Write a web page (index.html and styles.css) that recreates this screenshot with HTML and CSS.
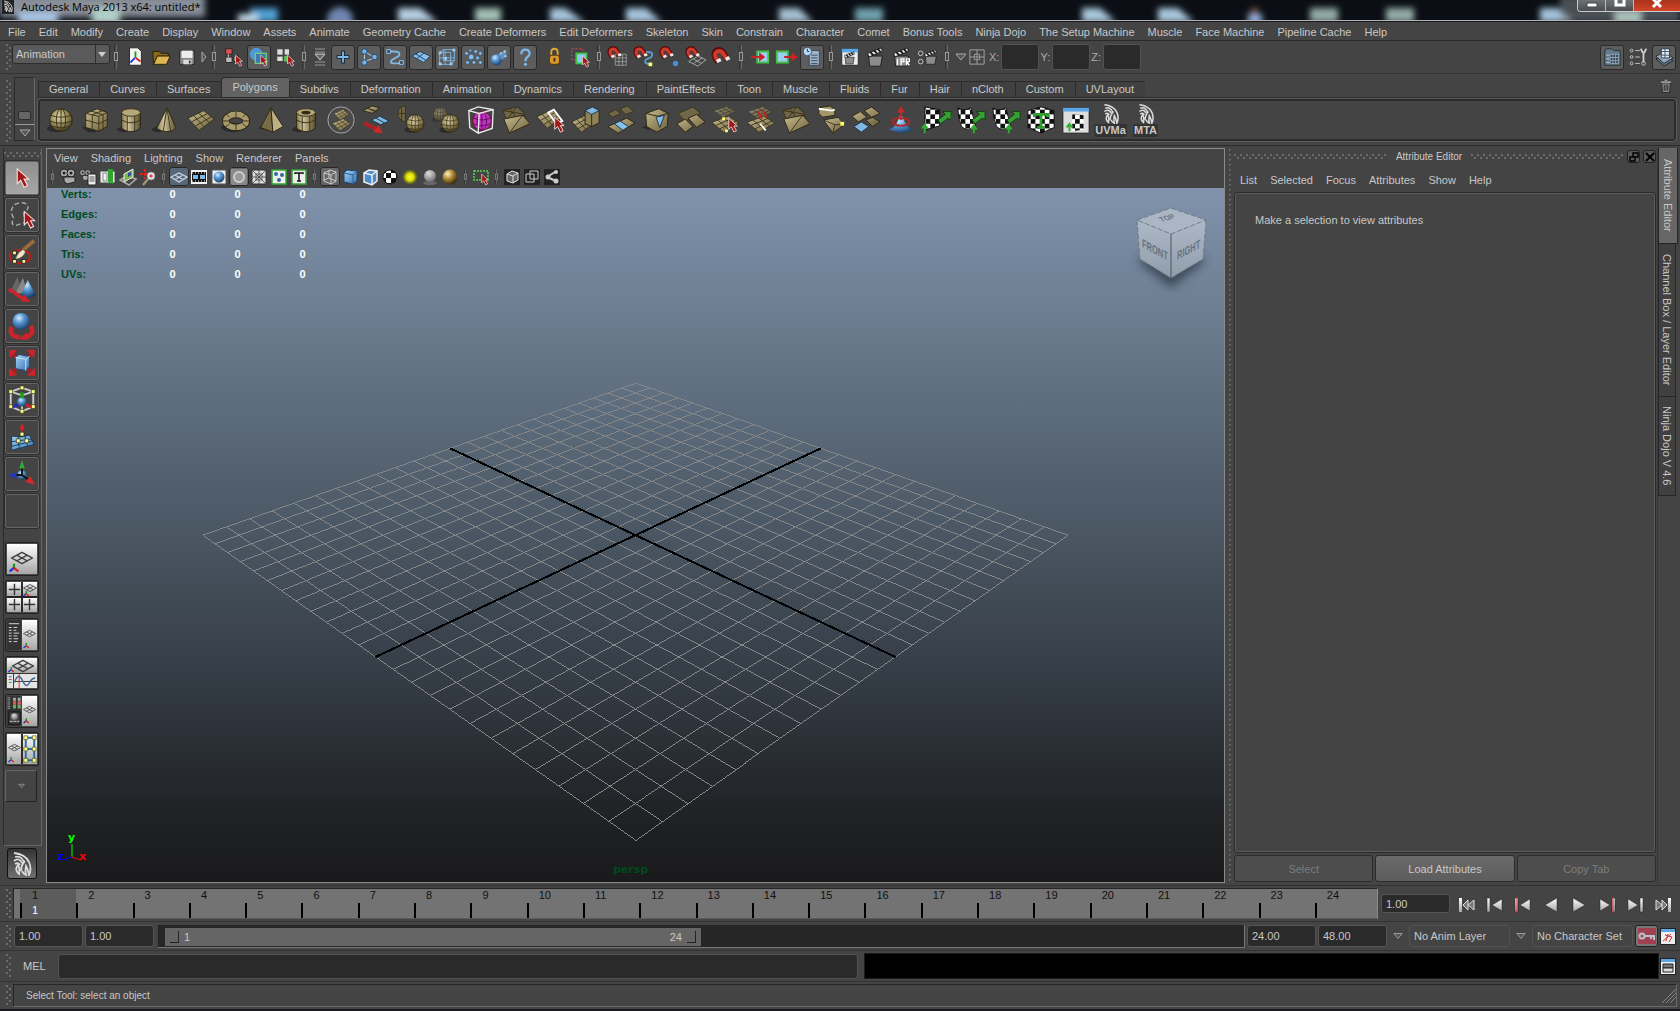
FILE: index.html
```html
<!DOCTYPE html>
<html lang="en">
<head>
    <meta charset="UTF-8">
    <meta name="viewport" content="width=device-width, initial-scale=1.0">
    <title>Autodesk Maya 2013 x64: untitled*</title>
    <link rel="stylesheet" href="styles.css">
</head>
<body>
    <!-- Icon library -->
    <svg class="defs" width="0" height="0" aria-hidden="true">
        <defs>
            <linearGradient id="tan" x1="0" y1="0" x2="1" y2="1"><stop offset="0" stop-color="#c9bd92"/><stop offset="1" stop-color="#6b5f3a"/></linearGradient>
            <linearGradient id="tanh" x1="0" y1="0" x2="1" y2="0"><stop offset="0" stop-color="#857a52"/><stop offset=".35" stop-color="#cdc29a"/><stop offset="1" stop-color="#574d2e"/></linearGradient>
            <radialGradient id="tanr" cx=".4" cy=".35" r=".7"><stop offset="0" stop-color="#e0d7b0"/><stop offset=".5" stop-color="#9d915f"/><stop offset="1" stop-color="#453c20"/></radialGradient>
            <linearGradient id="blue" x1="0" y1="0" x2="1" y2="1"><stop offset="0" stop-color="#a5d3f5"/><stop offset="1" stop-color="#3573b0"/></linearGradient>
            <radialGradient id="bluer" cx=".38" cy=".3" r=".75"><stop offset="0" stop-color="#d5ecff"/><stop offset=".4" stop-color="#5a99d6"/><stop offset="1" stop-color="#163a66"/></radialGradient>
            <linearGradient id="silver" x1="0" y1="0" x2="0" y2="1"><stop offset="0" stop-color="#ffffff"/><stop offset="1" stop-color="#a5a5a5"/></linearGradient>
            <linearGradient id="face" x1="0" y1="0" x2="0" y2="1"><stop offset="0" stop-color="#aeb9c8"/><stop offset="1" stop-color="#8f9dab"/></linearGradient>
            <radialGradient id="gold" cx=".35" cy=".3" r=".75"><stop offset="0" stop-color="#fff3c0"/><stop offset=".45" stop-color="#b08a35"/><stop offset="1" stop-color="#33240a"/></radialGradient>
            <radialGradient id="lamp"><stop offset="0" stop-color="#ffff30"/><stop offset=".5" stop-color="#d8d800"/><stop offset="1" stop-color="#888800" stop-opacity="0"/></radialGradient>
            <radialGradient id="grayr" cx=".4" cy=".3" r=".75"><stop offset="0" stop-color="#e0e0e0"/><stop offset="1" stop-color="#666666"/></radialGradient>
            <filter id="soft"><feGaussianBlur stdDeviation="5"/></filter>
            <filter id="softer" x="-10%" width="120%" y="-60%" height="220%"><feGaussianBlur stdDeviation="3"/></filter>
            <pattern id="check" width="10" height="10" patternUnits="userSpaceOnUse"><path fill="#fff" d="M0 0h10v10H0z"/><path fill="#111" d="M0 0h5v5H0zM5 5h5v5H5z"/></pattern>
        </defs>

        <!-- shared parts -->
        <symbol id="cursor" viewBox="0 0 12 18"><path d="M1 1v13l3-3 3 6 3-1.500-3-5.500h4z" fill="#a01818" stroke="#f4dcdc"/></symbol>
        <symbol id="clap" viewBox="0 0 24 24"><path d="M4 11h15l-2 11H5z" fill="#8c8c8c" stroke="#1c1c1c"/><path d="M3 8L18 2l1 4L4 12z" fill="#e8e8e8" stroke="#111"/><path d="M6 7l3 3M10 5l3 3M14 3.500l3 3" stroke="#111" stroke-width="2"/></symbol>
        <symbol id="magnet" viewBox="0 0 24 24"><path d="M7 15L4 10Q2 4 8 3q3 0 5 4l4 6" fill="none" stroke="#5a0e0a" stroke-width="6"/><path d="M7 14L4.500 10Q3 5 8 4q3 0 5 4l3 4" fill="none" stroke="#d23a2e" stroke-width="4"/><path d="M5 13l4-2 1.500 3-4 2zM14 11l3.500-2 2 3-4 2z" fill="#eee"/></symbol>
        <symbol id="sheet" viewBox="1 6 30 23" preserveAspectRatio="none"><path d="M2 15L19 7l11 9-16 12z" fill="url(#tan)" stroke="#3a3218"/><path d="M6 19l17-9M10 23.500l17-10M8 12l11 12M13.500 9.500l11 10" fill="none" stroke="#3a3218"/></symbol>
        <symbol id="plane2" viewBox="0 0 24 14"><path d="M12 1l11 6-11 6L1 7z M6.500 4l11 6M17.500 4l-11 6" fill="none" stroke="#444" stroke-width="1.500"/></symbol>
        <symbol id="tri" viewBox="0 0 12 12"><path d="M6 6V1" stroke="#0a9a0a" stroke-width="2.500"/><path d="M6 6L1 10" stroke="#2030e0" stroke-width="2.500"/><path d="M6 6l5 4" stroke="#e02020" stroke-width="2.500"/></symbol>
        <symbol id="bird" viewBox="0 0 24 24"><path d="M4 1q11 1 15 9 3 7 0 13-1-6-3-9-1 6 0 9-3-1-4-4M5 5q6-2 9 5M4 9q5-4 8 2M5 12q3-2 5 1M9 22q-5-4-1-9 2 3 1 9zM11 19q0-6 4-10" fill="none" stroke="#dcdcdc" stroke-width="1.800"/></symbol>
        <symbol id="sep" viewBox="0 0 12 28"><path d="M6 2v24" stroke="#8c8c8c"/><path d="M5 2v24" stroke="#222"/><rect x="4.500" y="9.500" width="3" height="8" fill="#444" stroke="#999"/></symbol>
        <symbol id="down" viewBox="0 0 12 10"><path d="M1 2h10L6 8z" fill="#555" stroke="#aaa"/></symbol>

        <!-- status line -->
        <symbol id="i-new" viewBox="0 0 24 24"><path d="M6 2h9l4 4v15H6z" fill="#f4f4f4" stroke="#222"/><path d="M12.500 13V6" stroke="#12a012" stroke-width="2"/><path d="M12 13l-5 5" stroke="#2040e0" stroke-width="2"/><path d="M13 13l5 4" stroke="#e02020" stroke-width="2"/></symbol>
        <symbol id="i-open" viewBox="0 0 24 24"><path d="M3 6h7l2 2h8v3H8l-4 9z" fill="#8a6a20" stroke="#2b2000"/><path d="M8 11h14l-4 9H4z" fill="#dcb554" stroke="#2b2000"/></symbol>
        <symbol id="i-save" viewBox="0 0 24 24"><path d="M4 5h16v15H5l-1-1z" fill="#888" stroke="#222"/><path d="M6 5h12v8H6z" fill="#eee"/><path d="M8 15h9v5H8z" fill="#ddd"/><path d="M14 16h2v3h-2z" fill="#333"/></symbol>
        <symbol id="i-hier" viewBox="0 0 24 24"><path d="M4 3h7v6H4z" fill="#e05050" stroke="#222"/><path d="M4 12h7v6H4zM13 11h5v6h-5z" fill="#bbb" stroke="#222"/><path d="M7 9v3" stroke="#ddd"/><use href="#cursor" x="14" y="9" width="9" height="14"/></symbol>
        <symbol id="i-obj" viewBox="0 0 24 24"><circle cx="9" cy="9" r="7" fill="#4f98d8"/><path d="M8 8h12v11H8z" fill="#3e7ab0" stroke="#6bd06b" stroke-width="1.500"/><use href="#cursor" x="13" y="9" width="9" height="14"/></symbol>
        <symbol id="i-comp" viewBox="0 0 24 24"><path d="M3 3h7v7H3zM11 3h6v7h-6zM3 11h7v6H3z" fill="#ddd" stroke="#333"/><path d="M11 11h6v6h-6z" fill="#57c057"/><use href="#cursor" x="14" y="9" width="9" height="14"/></symbol>
        <symbol id="i-mask" viewBox="0 0 20 24"><path d="M5 4h10M5 7h10M5 17h10M5 20h10" stroke="#999"/><path d="M5 9h10l-5 6z" fill="#666" stroke="#ccc"/></symbol>
        <symbol id="i-plus" viewBox="0 0 24 24"><path d="M12 5v14M5 12h14" stroke="#123" stroke-width="4"/><path d="M12 6v12M6 12h12" stroke="#7db8e8" stroke-width="2"/></symbol>
        <symbol id="i-joint" viewBox="0 0 24 24"><path d="M7 6v12M7 6l10 6M7 17l11-4" stroke="#bcdcf5" fill="none"/><g fill="#79b2e2" stroke="#1a4468"><circle cx="7" cy="6" r="3"/><circle cx="7" cy="18" r="3"/><circle cx="18" cy="12" r="3"/></g></symbol>
        <symbol id="i-curve" viewBox="0 0 24 24"><path d="M5 6h6q8 0 5 5l-7 4q-4 4 2 4h8" fill="none" stroke="#7db8e8" stroke-width="2"/><path d="M3 4h4v4H3zM17 16h4v4h-4z" fill="#345" stroke="#9cf"/></symbol>
        <symbol id="i-surf" viewBox="0 0 24 24"><path d="M2 11l9-5 11 5-7 7z" fill="#86bde9" stroke="#1b3c58"/><path d="M6 8.500l11 7M15 8L7 14" stroke="#1b3c58"/></symbol>
        <symbol id="i-latt" viewBox="0 0 24 24"><path d="M4 7h12v13H4zM8 4h12v12H8zM10 5v15M4 13h16M4 7l4-3M16 20l4-4" fill="none" stroke="#7db8e8"/><path d="M3 6h3v3H3zM3 18h3v3H3zM15 18h3v3h-3zM18 3h3v3h-3zM9 12h3v3H9z" fill="#9cd0fa"/></symbol>
        <symbol id="i-part" viewBox="0 0 24 24"><g fill="#86bde9" stroke="#1b3c58" stroke-width=".5"><circle cx="5" cy="8" r="2"/><circle cx="10" cy="12" r="3"/><circle cx="15" cy="6" r="2"/><circle cx="17" cy="13" r="2"/><circle cx="6" cy="18" r="2"/><circle cx="13" cy="18" r="2"/><circle cx="20" cy="8" r="2"/><circle cx="20" cy="18" r="2"/><circle cx="9" cy="5" r="1.500"/></g></symbol>
        <symbol id="i-rend" viewBox="0 0 24 24"><circle cx="9" cy="15" r="6" fill="url(#bluer)"/><path d="M11 9l9-5v8l-5 3z" fill="#5c94c6"/><path d="M13 7h2v2h-2zM17 5h2v2h-2zM18 10h2v2h-2z" fill="#bde"/></symbol>
        <symbol id="i-help" viewBox="0 0 24 24"><path d="M8 9q0-5 4.500-5T17 8.500q0 2-3 4-1.500 1-1.500 4" fill="none" stroke="#7db8e8" stroke-width="2.500"/><circle cx="12.500" cy="20" r="1.700" fill="#7db8e8"/></symbol>
        <symbol id="i-lock" viewBox="0 0 24 24"><path d="M9 11V7q0-4 3.500-4T16 7v4" fill="none" stroke="#e0a830" stroke-width="2"/><rect x="7" y="10" width="11" height="10" rx="3" fill="#d8982a" stroke="#4b2f00"/><path d="M12.500 13v4" stroke="#422" stroke-width="2"/></symbol>
        <symbol id="i-hilite" viewBox="0 0 24 24"><path d="M3 3h12v12H3z" fill="none" stroke="#e05050" stroke-dasharray="2 2"/><path d="M8 8h11v11H8z" fill="#8ccaf5" stroke="#40c040" stroke-width="2"/><use href="#cursor" x="14" y="10" width="9" height="14"/></symbol>
        <symbol id="i-sgrid" viewBox="0 0 24 24"><path d="M9 9h12v12H9zM13 9v12M17 9v12M9 13h12M9 17h12" fill="none" stroke="#999"/><use href="#magnet" x="0" y="0" width="20" height="20"/></symbol>
        <symbol id="i-scurve" viewBox="0 0 24 24"><path d="M12 7q12-2 8 5l-6 3q-3 4 5 5" fill="none" stroke="#5a9ad0" stroke-width="2"/><path d="M17 18h4v4h-4z" fill="#ff6"/><use href="#magnet" x="0" y="0" width="20" height="20"/></symbol>
        <symbol id="i-spoint" viewBox="0 0 24 24"><circle cx="18" cy="19" r="3" fill="#4a90d0"/><use href="#magnet" x="0" y="0" width="20" height="20"/></symbol>
        <symbol id="i-splane" viewBox="0 0 24 24"><path d="M4 17l10-6 9 4-9 7zM9 14l9 5M19 13L9 19" fill="none" stroke="#aaa"/><use href="#magnet" x="0" y="0" width="20" height="20"/></symbol>
        <symbol id="i-in" viewBox="0 0 24 24"><path d="M9 6h12v12H9z" fill="#9ccdf2" stroke="#46c046" stroke-width="2"/><path d="M2 12h12M12 9l4 3-4 3z" stroke="#c22" stroke-width="2" fill="#c22"/></symbol>
        <symbol id="i-out" viewBox="0 0 24 24"><path d="M2 6h12v12H2z" fill="#9ccdf2" stroke="#46c046" stroke-width="2"/><path d="M10 12h10M19 9l4 3-4 3z" stroke="#c22" stroke-width="2" fill="#c22"/></symbol>
        <symbol id="i-hist" viewBox="0 0 24 24"><path d="M9 5h11v16H9z" fill="#9fb6cc" stroke="#345"/><path d="M11 10h7M11 13h7M11 16h7M11 19h7" stroke="#345"/><circle cx="7" cy="6" r="4.500" fill="#b9d8f0" stroke="#357"/><path d="M7 3v3h2" stroke="#235" fill="none"/></symbol>
        <symbol id="i-rview" viewBox="0 0 24 24"><path d="M3 3h18v18H3z" fill="#eee" stroke="#222"/><path d="M3 3h18v4H3z" fill="#5aa6e6"/><use href="#clap" x="4" y="5" width="16" height="16"/></symbol>
        <symbol id="i-ipr" viewBox="0 0 24 24"><use href="#clap" width="24" height="24"/><path d="M7 14v7M11 21v-7h3v3h-3M17 21v-7h3v3h-3l3 4" fill="none" stroke="#fff" stroke-width="1.500"/></symbol>
        <symbol id="i-rset" viewBox="0 0 24 24"><use href="#clap" x="6" y="2" width="19" height="20"/><circle cx="4" cy="8" r="2.500" fill="#444" stroke="#ccc"/><circle cx="4" cy="17" r="2.500" fill="#444" stroke="#ccc"/></symbol>
        <symbol id="i-abs" viewBox="0 0 18 18"><path d="M1 1h16v16H1zM9 1v16M1 9h16" fill="none" stroke="#aaa"/><path d="M6 6h6v6H6z" fill="#444" stroke="#aaa"/><path d="M9 7v4M7 9h4" stroke="#aaa"/></symbol>
        <symbol id="i-attr" viewBox="0 0 24 24"><path d="M4 6l2-3h6l2 2h7v16H4z" fill="#64798e" stroke="#233"/><path d="M10 9h9v10h-9zM13 9v10M16 9v10M10 12.500h9M10 16h9" fill="#2e4152" stroke="#9ab"/><path d="M6 10h3M6 14h3M6 18h3" stroke="#cde"/></symbol>
        <symbol id="i-tool" viewBox="0 0 24 24"><g fill="none" stroke="#ccc"><circle cx="5" cy="5" r="1.500"/><circle cx="5" cy="12" r="1.500"/><circle cx="5" cy="19" r="1.500"/><path d="M9 5h5M9 12h5M9 19h5"/><path d="M15 3l2 4h2l2-4M18 7v11" stroke-width="2"/><circle cx="18" cy="19" r="2"/></g></symbol>
        <symbol id="i-chan" viewBox="0 0 24 24"><path d="M3 14l10-4 9 6-10 6z" fill="#5d7388" stroke="#222"/><path d="M3 11l10-4 9 6-10 6z" fill="#93abc0" stroke="#222"/><path d="M9 3h9v10H9z" fill="#dfeaf3" stroke="#334"/><path d="M4 5h5M4 9h5M9 6h9M9 10h9M13 3v10" stroke="#456"/></symbol>
        <symbol id="i-trash" viewBox="0 0 16 18"><path d="M3 6h10l-1 11H4z" fill="#8a8a8a" stroke="#222"/><path d="M2 4h12v2H2zM6 2h4v2H6z" fill="#ccc" stroke="#222" stroke-width=".5"/><path d="M6 8v7M8 8v7M10 8v7" stroke="#222"/></symbol>

        <!-- shelf -->
        <symbol id="s-plane" viewBox="0 0 32 32"><use href="#sheet" x="1" y="5" width="30" height="23"/></symbol>
        <symbol id="s-sphere" viewBox="0 0 32 32"><ellipse cx="10" cy="25" rx="9" ry="4" fill="#2c2c2c"/><circle cx="16" cy="16" r="12" fill="url(#tanr)" stroke="#2b2410"/><g fill="none" stroke="#3a3218"><ellipse cx="16" cy="16" rx="5" ry="12"/><path d="M16 4v24M5 11q11 4 22 0M4 17q12 5 24 0M7 23q9 3 18 0"/></g></symbol>
        <symbol id="s-cube" viewBox="0 0 32 32"><path d="M1 24l8-3 8 8H8z" fill="#2c2c2c"/><path d="M5 9l12-5 11 4v15l-9 5-14-4z" fill="url(#tan)" stroke="#2b2410"/><path d="M5 9l14 3 9-4M19 12v16M12 10.500v15M23.500 10v15.500M5 16l14 4 9-4.500M11 6.500l13 4M23 6l-11 4.500" fill="none" stroke="#3a3218"/></symbol>
        <symbol id="s-cyl" viewBox="0 0 32 32"><ellipse cx="9" cy="26" rx="8" ry="3" fill="#2c2c2c"/><path d="M6 8v17q10 7 20 0V8" fill="url(#tanh)" stroke="#2b2410"/><path d="M6 16q10 6 20 0M12 11v17M20 11v17" fill="none" stroke="#3a3218"/><ellipse cx="16" cy="8" rx="10" ry="4" fill="#b5a97c" stroke="#3a3218"/></symbol>
        <symbol id="s-cone" viewBox="0 0 32 32"><ellipse cx="8" cy="26" rx="7" ry="3" fill="#2c2c2c"/><path d="M17 3L6 25q11 7 21 0z" fill="url(#tanh)" stroke="#2b2410"/><path d="M17 3l-4 25M17 3l4 25" stroke="#3a3218"/></symbol>
        <symbol id="s-torus" viewBox="0 0 32 32"><ellipse cx="12" cy="24" rx="12" ry="5" fill="#2c2c2c"/><ellipse cx="16" cy="17" rx="11" ry="7" fill="none" stroke="#2b2410" stroke-width="8"/><ellipse cx="16" cy="17" rx="11" ry="7" fill="none" stroke="#a79b6d" stroke-width="6"/><path d="M16 21v7M16 7v6M9 20l-5 4M23 20l5 4M9 13L5 9M23 13l4-4M2 17h6M24 17h6" stroke="#3a3218"/></symbol>
        <symbol id="s-pyr" viewBox="0 0 32 32"><path d="M2 25l10-7v9z" fill="#2c2c2c"/><path d="M16 3L5 24l13 5z" fill="#776c45" stroke="#2b2410"/><path d="M16 3l2 26 11-6z" fill="#bdb184" stroke="#2b2410"/></symbol>
        <symbol id="s-pipe" viewBox="0 0 32 32"><use href="#s-cyl" width="32" height="32"/><ellipse cx="16" cy="8" rx="5" ry="2" fill="#332c15"/></symbol>
        <symbol id="s-comb" viewBox="0 0 32 32"><circle cx="16" cy="16" r="14" fill="#4a4a4a" stroke="#aaa"/><use href="#sheet" x="8" y="4" width="17" height="13"/><use href="#sheet" x="6" y="14" width="21" height="14"/></symbol>
        <symbol id="s-extr" viewBox="0 0 32 32"><path d="M2 6l10-5 8 2-8 6zM7 3.500l8 3" fill="url(#tan)" stroke="#2b2410"/><path d="M11 16l9-4 10 5-9 4z" fill="#7fb8e0" stroke="#234"/><path d="M16 14l9 5M11 5h2" stroke="#234"/><path d="M3 19l14 7" stroke="#b32222" stroke-width="4"/><path d="M23 30l-10-1 6-8z" fill="#c82a2a"/></symbol>
        <symbol id="s-sph2" viewBox="0 0 32 32"><g opacity=".5"><use href="#s-sphere" width="20" height="20"/></g><use href="#s-sphere" x="8" y="7" width="25" height="25"/></symbol>
        <symbol id="s-mirror" viewBox="0 0 32 32"><path d="M10 1v17Q2 16 2 9t8-8zM2 9h8M6 3v13" fill="#6f6747" stroke="#3a3218"/><use href="#s-sphere" x="8" y="7" width="25" height="25"/></symbol>
        <symbol id="s-cage" viewBox="0 0 32 32"><circle cx="17" cy="17" r="10" fill="#c233c2" stroke="#611"/><path d="M17 7v20M8 14q9 4 18 0M8 20q9 4 18 0" fill="none" stroke="#5c0f5c"/><ellipse cx="17" cy="17" rx="5" ry="10" fill="none" stroke="#5c0f5c"/><path d="M3 6l10-4 16 3-1 20-15 5-9-6zM3 6l11 3 15-4M14 9l-1 21" fill="none" stroke="#e8e8e8" stroke-width="1.500"/></symbol>
        <symbol id="s-fold" viewBox="0 0 32 32"><path d="M2 6l15-4 9 8-20 6z" fill="#6f6747" stroke="#3a3218"/><path d="M2 6l24 4M17 2L6 16M9 4l7 9" stroke="#3a3218"/><path d="M3 15l20-4 8 9-22 10z" fill="url(#tan)" stroke="#2b2410"/><path d="M9 30l14-19" stroke="#3a3218"/></symbol>
        <symbol id="s-cut" viewBox="0 0 32 32"><use href="#sheet" x="0" y="4" width="28" height="22"/><path d="M13 8l6-3 9 12-6 3z" fill="none" stroke="#fff" stroke-width="2"/><use href="#cursor" x="19" y="12" width="12" height="18"/></symbol>
        <symbol id="s-extface" viewBox="0 0 32 32"><use href="#sheet" y="10" width="26" height="20"/><path d="M15 6v14l7 3 8-4V6z" fill="#8d8159" stroke="#2b2410"/><path d="M15 6l8-4 7 4-8 4z" fill="#7fb8e0" stroke="#234"/><path d="M22 10v13" stroke="#2b2410"/></symbol>
        <symbol id="s-bridge" viewBox="0 0 32 32"><path d="M2 9l8-4 6 4-9 4zM15 4l8-3 6 6-8 3z" fill="#6f6747" stroke="#3a3218"/><path d="M2 23l20-9 9 5-18 11z" fill="url(#tan)" stroke="#2b2410"/><path d="M9 20l6-3 9 6-6 4z" fill="#86c2ee" stroke="#234"/></symbol>
        <symbol id="s-bevel" viewBox="0 0 32 32"><path d="M1 24l8-4v7z" fill="#2c2c2c"/><path d="M5 9l14-5 10 5-1 14-11 6-11-6z" fill="url(#tan)" stroke="#2b2410"/><path d="M5 9l13 3 11-3" fill="none" stroke="#2b2410"/><path d="M16 13l9-2-5 13z" fill="#84bde8" stroke="#234"/></symbol>
        <symbol id="s-dup" viewBox="0 0 32 32"><path d="M2 9l16-7 8 7-16 8z" fill="#6f6747" stroke="#3a3218"/><path d="M1 20l9-5 8 8-8 6zM13 14l9-4 9 8-9 6z" fill="url(#tan)" stroke="#2b2410"/></symbol>
        <symbol id="s-target" viewBox="0 0 32 32"><g opacity=".6"><use href="#sheet" x="2" y="1" width="25" height="13"/></g><use href="#sheet" y="11" width="31" height="19"/><path d="M12 13h3v3h-3zM15 26h3v3h-3z" fill="#ff7"/><use href="#cursor" x="18" y="13" width="11" height="17"/></symbol>
        <symbol id="s-split" viewBox="0 0 32 32"><g opacity=".6"><use href="#sheet" x="1" y="1" width="28" height="15"/></g><use href="#sheet" y="11" width="32" height="19"/><path d="M13 7l4 8M18 6l4 7" stroke="#c22" stroke-width="2"/><path d="M15 20l6 7" stroke="#fff" stroke-width="2"/></symbol>
        <symbol id="s-blocks" viewBox="0 0 32 32"><path d="M3 3l12-2 5 4v6L7 13 3 9z" fill="#a2966a" stroke="#2b2410"/><path d="M3 4l14 2 3-1" stroke="#fff" stroke-width="2" fill="none"/><path d="M8 16l16-3 6 8-12 9z" fill="url(#tan)" stroke="#2b2410"/><path d="M8 16l12 5 10 0M20 21l-2 9" fill="none" stroke="#3a3218"/><path d="M26 18h4v4h-4z" fill="#ff6"/></symbol>
        <symbol id="s-tiles" viewBox="0 0 32 32"><path d="M1 12l9-5 7 6-9 5zM14 6l8-4 9 7-9 4zM16 16l7-3 8 5-8 5z" fill="url(#tan)" stroke="#2b2410"/><path d="M3 23l8-5 8 5-8 6z" fill="#7fb8e0" stroke="#234"/></symbol>
        <symbol id="s-soft" viewBox="0 0 32 32"><path d="M1 26q10 0 13-14h4q3 14 13 14L17 30z" fill="url(#bluer)"/><ellipse cx="16" cy="18" rx="9" ry="4" fill="none" stroke="#b92323" stroke-width="2"/><path d="M16 16V6" stroke="#c52a2a" stroke-width="2"/><path d="M12 8l4-7 4 7z" fill="#c52a2a"/></symbol>
        <symbol id="s-uv" viewBox="0 0 32 32"><path d="M4 2l16 3v17L4 27z" fill="url(#check)" stroke="#111"/><path d="M18 16l8-6-3-3h9v9l-3-2-8 6z" fill="#37a037" stroke="#0d400d"/><path d="M4 30v-7M1 25l3-4 3 4" stroke="#2fae2f" stroke-width="2" fill="none"/></symbol>
        <symbol id="s-uvcyl" viewBox="0 0 32 32"><path d="M2 3q6 4 14 0 2 10 5 18-8 9-15 2Q2 15 2 3z" fill="url(#check)" stroke="#111"/><path d="M17 16l8-6-3-3h9v9l-3-2-8 6z" fill="#37a037" stroke="#0d400d"/><path d="M19 30v-6M16 26l3-4 3 4" stroke="#2fae2f" stroke-width="2" fill="none"/></symbol>
        <symbol id="s-uvauto" viewBox="0 0 32 32"><path d="M2 6l14-4 14 4v18l-14 6-14-6z" fill="url(#check)" stroke="#111"/><path d="M9 13v-3h14v3M16 11v12M12 24h8" stroke="#2fa02f" stroke-width="3" fill="none"/></symbol>
        <symbol id="s-uvwin" viewBox="0 0 32 32"><path d="M2 3h28v27H2z" fill="#ddd" stroke="#222"/><path d="M2 3h28v4H2z" fill="#5aa6e6"/><path d="M12 9l12 2v15l-12 2z" fill="url(#check)"/><path d="M9 28v-6M6 24l3-4 3 4" stroke="#2fae2f" stroke-width="2" fill="none"/></symbol>

        <!-- toolbox -->
        <symbol id="t-lasso" viewBox="0 0 32 32"><path d="M8 5q8-4 14 0 2 5-4 9l1 10-9 3q-7 1-3-8-5-8 1-14z" fill="none" stroke="#aaa" stroke-width="1.500" stroke-dasharray="5 3"/><use href="#cursor" x="17" y="11" width="14" height="20"/></symbol>
        <symbol id="t-paint" viewBox="0 0 32 32"><ellipse cx="14" cy="21" rx="11" ry="7" fill="none" stroke="#b31f1f" stroke-width="2.500"/><path d="M17 14L29 4" stroke="#9a6a3a" stroke-width="4"/><path d="M9 24q1-7 8-11l3 3q-3 7-11 8z" fill="#ede4c8" stroke="#543"/><path d="M6 15h4v4H6zM6 24h4v4H6zM16 24h4v4h-4z" fill="#ff9" stroke="#222"/></symbol>
        <symbol id="t-move" viewBox="0 0 32 32"><path d="M3 20L11 3l5 16z" fill="#666"/><path d="M9 21l8-17 5 16z" fill="#888"/><path d="M15 23l7-17 9 17q-7 4-16 0z" fill="url(#bluer)"/><path d="M2 16l16 11" stroke="#c8242c" stroke-width="4"/><path d="M25 30l-11-1 5-7z" fill="#c8242c"/></symbol>
        <symbol id="t-rot" viewBox="0 0 32 32"><path d="M5 17q-4 10 9 11M25 16q6 8-5 12" fill="none" stroke="#c8242c" stroke-width="5"/><path d="M12 30l9-7 2 8z" fill="#c8242c"/><circle cx="15" cy="11" r="9" fill="url(#bluer)"/></symbol>
        <symbol id="t-scale" viewBox="0 0 32 32"><path d="M6 6l20 20M26 6L6 26" stroke="#a51e24" stroke-width="4"/><path d="M2 2h9l-8 9zM30 2h-9l8 9zM2 30v-9l9 8zM30 30v-9l-9 8z" fill="#c8242c"/><path d="M9 10l4-3 11 2v11l-4 4-11-2z" fill="url(#blue)" stroke="#1d4878"/><path d="M9 10l11 2 4-3M20 12v12" fill="none" stroke="#cde6fc"/></symbol>
        <symbol id="t-univ" viewBox="0 0 32 32"><path d="M16 3L28 7v16l-12 5-12-5V7zM4 7l12 4 12-4M16 11v17" fill="none" stroke="#ccc" stroke-width="2"/><circle cx="16" cy="18" r="5" fill="url(#bluer)"/><path d="M16 14V8" stroke="#1ba31b" stroke-width="4"/><path d="M5 24l7-3" stroke="#2030d0" stroke-width="3"/><path d="M27 24l-7-3" stroke="#d02020" stroke-width="3"/><path d="M14 1h4v4h-4zM2 5h4v4H2zM26 5h4v4h-4zM2 21h4v4H2zM26 21h4v4h-4zM14 26h4v4h-4z" fill="#ff8" stroke="#331" stroke-width=".7"/></symbol>
        <symbol id="t-soft" viewBox="0 0 32 32"><path d="M5 15l10 1 9-2 5 10-24 6z" fill="url(#blue)" stroke="#15395a"/><path d="M5 21l22-3M5 26l23-6M12 15l1 13M19 15l3 11" stroke="#15395a"/><path d="M16 12V6" stroke="#b22" stroke-width="2"/><path d="M13 8l3-7 3 7z" fill="#c8242c"/><path d="M14 11h4v4h-4zM10 18h4v4h-4zM19 18h4v4h-4z" fill="#ff9" stroke="#331" stroke-width=".7"/></symbol>
        <symbol id="t-manip" viewBox="0 0 32 32"><circle cx="16" cy="17" r="5" fill="url(#bluer)"/><path d="M16 17V9M16 17H9M16 17l8 6" stroke="#111" stroke-width="2"/><path d="M13 10l3-9 3 9z" fill="#2fa83a"/><path d="M10 14v7L1 17z" fill="#2438b8"/><path d="M20 24l5-5 4 8z" fill="#d02a2a" stroke="#d02a2a"/></symbol>
        <symbol id="l-persp" viewBox="0 0 34 34"><path fill="url(#silver)" d="M1 1h32v32H1z"/><use href="#plane2" x="5" y="8" width="24" height="16"/><use href="#tri" x="3" y="21" width="11" height="11"/></symbol>
        <symbol id="l-four" viewBox="0 0 34 34"><path fill="url(#silver)" d="M1 1h32v15H1z"/><path fill="url(#silver)" d="M1 18h32v15H1z"/><path d="M17 1v32M1 17h32" stroke="#222" stroke-width="2"/><path d="M9 3v12M3 9h12M9 19v12M3 25h12M25 19v12M19 25h12" stroke="#333" stroke-width="1.500"/><use href="#plane2" x="18" y="3" width="15" height="9"/><use href="#tri" x="18" y="10" width="7" height="7"/></symbol>
        <symbol id="l-outl" viewBox="0 0 34 34"><path fill="#333" d="M1 1h15v32H1z"/><path d="M3 5h11M3 9h3m2 0h4M3 12h3m2 0h3M3 15h3m2 0h6M3 18h3m2 0h4M3 21h3m2 0h5M3 24h3m2 0h4" stroke="#ddd"/><path fill="url(#silver)" d="M17 1h16v32H17z"/><use href="#plane2" x="18" y="11" width="14" height="9"/><use href="#tri" x="18" y="25" width="7" height="7"/></symbol>
        <symbol id="l-graph" viewBox="0 0 34 34"><path fill="url(#silver)" d="M1 1h32v16H1z"/><path fill="#e4e4e4" d="M1 18h32v15H1z"/><use href="#plane2" x="6" y="2" width="24" height="15"/><use href="#tri" x="2" y="10" width="7" height="7"/><path d="M1 17.500h32M8 26h25M8 18v15" stroke="#333"/><path d="M9 27q4-12 9-1 4 8 7 1 2-4 6-5" fill="none" stroke="#3b6a9a" stroke-width="1.500"/><path d="M14 18v15" stroke="#e22"/><path d="M3 21h3" stroke="#26c"/><path d="M3 24h3" stroke="#c22"/><path d="M3 27h3" stroke="#2a2"/></symbol>
        <symbol id="l-hyper" viewBox="0 0 34 34"><path fill="#333" d="M1 1h15v32H1z"/><path d="M3 2v13" stroke="#999" stroke-width="3" stroke-dasharray="1 1"/><path d="M9 3v11M14 3v11" stroke="#aaa" stroke-width="3" stroke-dasharray="3 1"/><path d="M7.500 7h3v3h-3zM12.500 7h3v3h-3z" fill="#d55"/><path d="M7.500 11h3v3h-3zM12.500 11h3v3h-3z" fill="#5b5"/><path d="M3 18h12v13H3z" fill="#444" stroke="#111"/><circle cx="9" cy="23" r="3.500" fill="url(#grayr)"/><path d="M4 28h10" stroke="#ccc" stroke-dasharray="3 1"/><path fill="url(#silver)" d="M17 1h16v32H17z"/><use href="#plane2" x="18" y="11" width="14" height="9"/><use href="#tri" x="18" y="24" width="7" height="7"/></symbol>
        <symbol id="l-uv" viewBox="0 0 34 34"><path fill="url(#silver)" d="M1 1h32v32H1z"/><path d="M17 1v32" stroke="#222" stroke-width="2"/><use href="#plane2" x="2" y="11" width="14" height="9"/><use href="#tri" x="2" y="25" width="7" height="7"/><path d="M21 5h9v24h-9zM21 17h9" fill="none" stroke="#2d6ca0" stroke-width="2"/><path d="M19 3h4v4h-4zM28 3h4v4h-4zM19 15h4v4h-4zM28 15h4v4h-4zM19 27h4v4h-4zM28 27h4v4h-4z" fill="#ff8" stroke="#552" stroke-width=".7"/></symbol>

        <!-- panel toolbar -->
        <symbol id="p-cam" viewBox="0 0 18 18"><g fill="#aaa" stroke="#222"><circle cx="5" cy="5" r="4"/><circle cx="12" cy="5" r="4"/><path d="M5 9h11v5l-8 2-3-3z"/></g><circle cx="5" cy="5" r="1.500" fill="#222"/><circle cx="12" cy="5" r="1.500" fill="#222"/></symbol>
        <symbol id="p-camattr" viewBox="0 0 18 18"><use href="#p-cam" width="13" height="15"/><path d="M9 6h8v11H9z" fill="#eee" stroke="#222"/><path d="M10.500 9h5M10.500 11h5M10.500 13h5" stroke="#555"/></symbol>
        <symbol id="p-book" viewBox="0 0 18 18"><path d="M1 3h15v12H1z" fill="#eee" stroke="#444"/><path d="M4 5h4v8H4z" fill="none" stroke="#888"/><path d="M9 1h5v15l-2.500-2L9 16z" fill="#2fa52f"/></symbol>
        <symbol id="p-plane" viewBox="0 0 18 18"><path d="M1 12l7-4 9 3-7 6z" fill="none" stroke="#aaa" stroke-width="1.500"/><path d="M5 6l9-5v8l-9 5z" fill="#79b84b" stroke="#eee"/><path d="M9 5l3-1v3l-3 2z" fill="#34a"/></symbol>
        <symbol id="p-zoom" viewBox="0 0 18 18"><path d="M6 1v10M1 6h10" stroke="#d22" stroke-width="2" stroke-dasharray="3 1" fill="none"/><circle cx="12" cy="8" r="4" fill="#eee" stroke="#888"/><path d="M12 6v4M10 8h4" stroke="#c22"/><path d="M9 11l-5 6" stroke="#a97" stroke-width="2"/></symbol>
        <symbol id="p-grid" viewBox="0 0 18 18"><path d="M1 9l8-4 8 4-8 5zM5 7l8 4.500M13 7l-8 4.500" fill="none" stroke="#c6d2df" stroke-width="1.300"/></symbol>
        <symbol id="p-film" viewBox="0 0 18 18"><path d="M1 2h16v14H1z" fill="#f2f2f2"/><path d="M2 4h14v10H2z" fill="#111"/><path d="M2 5h14M2 13h14" stroke="#eee" stroke-dasharray="1 2"/><path d="M3 7h5v4H3zM10 7h5v4h-5z" fill="#7db8e8"/></symbol>
        <symbol id="p-res" viewBox="0 0 18 18"><path d="M2 2h14v14H2z" fill="#eee" stroke="#555"/><circle cx="9" cy="9" r="5.500" fill="url(#bluer)"/></symbol>
        <symbol id="p-gate" viewBox="0 0 18 18"><path d="M1 1h16v16H1z" fill="#8a8a8a"/><circle cx="9" cy="9" r="5" fill="#999" stroke="#ccc" stroke-width="2"/></symbol>
        <symbol id="p-field" viewBox="0 0 18 18"><path d="M2 2h14v14H2z" fill="#ddd" stroke="#333"/><path d="M2 2l14 14M16 2L2 16M9 2v14M2 9h14M6 6h6v6H6z" fill="none" stroke="#444" stroke-width=".8"/></symbol>
        <symbol id="p-safe" viewBox="0 0 18 18"><path d="M2 2h14v14H2z" fill="#eee" stroke="#36a836" stroke-width="1.500"/><circle cx="6" cy="6" r="2" fill="#369"/><circle cx="12" cy="7" r="2" fill="#369"/><circle cx="9" cy="12" r="2" fill="#369"/></symbol>
        <symbol id="p-title" viewBox="0 0 18 18"><path d="M2 2h14v14H2z" fill="#eee" stroke="#36a836" stroke-width="1.500"/><path d="M5 6V5h8v1M9 5v8M7 13h4" stroke="#111" stroke-width="1.500" fill="none"/></symbol>
        <symbol id="p-wire" viewBox="0 0 18 18"><path d="M3 5l6-3 6 2v9l-5 3-7-3zM3 5l7 2 5-3M10 7v9M3 12l5-2 7 3M8 10V2" fill="none" stroke="#ccc"/></symbol>
        <symbol id="p-shade" viewBox="0 0 18 18"><path d="M3 5l3-3 10 1v10l-4 3-9-2z" fill="url(#blue)" stroke="#1b4370"/><path d="M3 5l9 2 4-4M12 7v9" fill="none" stroke="#2c6199"/></symbol>
        <symbol id="p-shwire" viewBox="0 0 18 18"><path d="M3 5l5-3 8 1v10l-5 4-8-3z" fill="#4f8ccb" stroke="#eee" stroke-width="1.500"/><path d="M3 5l8 2 5-4M11 7v9" fill="none" stroke="#eee" stroke-width="1.500"/></symbol>
        <symbol id="p-tex" viewBox="0 0 18 18"><circle cx="9" cy="9" r="7" fill="url(#check)" stroke="#111"/></symbol>
        <symbol id="p-light" viewBox="0 0 18 18"><circle cx="9" cy="9" r="8" fill="url(#lamp)"/></symbol>
        <symbol id="p-shadow" viewBox="0 0 18 18"><ellipse cx="9" cy="15" rx="7" ry="2" fill="#666"/><circle cx="9" cy="8" r="6" fill="url(#grayr)"/></symbol>
        <symbol id="p-hq" viewBox="0 0 18 18"><circle cx="9" cy="9" r="7.500" fill="url(#gold)"/></symbol>
        <symbol id="p-iso" viewBox="0 0 18 18"><path d="M2 3h14v9H2z" fill="none" stroke="#4cd84c" stroke-width="1.500" stroke-dasharray="2 1"/><use href="#cursor" x="9" y="5" width="8" height="13"/></symbol>
        <symbol id="p-xray" viewBox="0 0 18 18"><path fill="#222" d="M1 1h16v16H1z"/><path d="M4 6l5-3 6 2v7l-5 3-6-2z" fill="#666" stroke="#ddd"/><path d="M4 6l6 2 5-3M10 8v7" fill="none" stroke="#ddd"/></symbol>
        <symbol id="p-xact" viewBox="0 0 18 18"><path fill="#222" d="M1 1h16v16H1z"/><path d="M3 6h8v8H3zM7 3h8v8H7z" fill="none" stroke="#ccc"/></symbol>
        <symbol id="p-xjnt" viewBox="0 0 18 18"><path fill="#222" d="M1 1h16v16H1z"/><path d="M4 9l8-5M4 9l9 4" stroke="#ccc" stroke-width="2"/><circle cx="5" cy="9" r="2.500" fill="#ccc"/><circle cx="13" cy="4" r="2" fill="#ccc"/><circle cx="13" cy="13" r="2.500" fill="#ccc"/></symbol>

        <!-- playback -->
        <symbol id="b-first" viewBox="0 0 20 16"><path d="M2 1h3v14H2z" fill="url(#silver)"/><path d="M11 3v10L6 8zM17 3v10l-6-5z" fill="#777" stroke="#ddd"/></symbol>
        <symbol id="b-back" viewBox="0 0 20 16"><path d="M2 1h3v14H2zM17 2v12L7 8z" fill="url(#silver)" stroke="#222" stroke-width=".5"/></symbol>
        <symbol id="b-backkey" viewBox="0 0 20 16"><path d="M2 1h3v14H2zM17 2v12L7 8z" fill="url(#silver)" stroke="#222" stroke-width=".5"/><path d="M4 0v16" stroke="#d22"/></symbol>
        <symbol id="b-rev" viewBox="0 0 20 16"><path d="M16 1v14L4 8z" fill="url(#silver)" stroke="#222" stroke-width=".5"/></symbol>
    </svg>

    <header class="titlebar">
        <svg class="glass" viewBox="0 0 1680 20" preserveAspectRatio="none" aria-hidden="true">
            <g filter="url(#softer)">
                <path d="M0-5h205v22H0z" fill="#888f98"/>
                <path d="M18 12h40v12H18z" fill="#a9c4e4"/><path d="M92 8h28v16H92z" fill="#b0cfc6"/>
                <path d="M250 8h28v14h-28z" fill="#4f9fd0"/><path d="M238 14h20v9h-20z" fill="#c4dcec"/><circle cx="340" cy="20" r="13" fill="#7086b0"/>
                <path d="M398 8h22l18 14h-40z" fill="#b4cde0"/><path d="M475 8h26v14h-26z" fill="#a2c0b4"/>
                <path d="M550 8h15l20 14h-35zM626 8h20l16 14h-36z" fill="#a6c4dc"/>
                <path d="M779 8h20l14 14h-34z" fill="#a6c0cf"/><path d="M855 8h28v14h-28z" fill="#6f9fab"/>
                <path d="M1082 8h18l16 14h-34zM1158 8h20l16 14h-36z" fill="#a9c8dc"/>
                <path d="M1248 14h14v10h-14z" fill="#8fb0de"/><path d="M1251 8h7v7h-7z" fill="#8a5a40"/>
                <path d="M1310 8h28v14h-28zM1386 8h28v14h-28z" fill="#93aba4"/>
                <path d="M1540 8h18l16 14h-34z" fill="#a3c4da"/><path d="M1560-4h120v26h-120z" fill="#8a9094" opacity=".5"/><path d="M1614 10h28v14h-28z" fill="#a9c0b8"/>
            </g>
        </svg>
        <svg class="app-icon" viewBox="0 0 12 14" aria-hidden="true"><path fill="#222" d="M0 0h12v14H0z"/><use href="#bird" width="12" height="13"/></svg>
        <span class="app-title">Autodesk Maya 2013 x64: untitled*</span>
        <div class="window-buttons">
            <button type="button" aria-label="Minimize"><svg width="12" height="8" viewBox="0 0 12 8"><path d="M1 3h10v4H1z" fill="#fff" stroke="#444"/></svg></button>
            <button type="button" aria-label="Maximize"><svg width="12" height="10" viewBox="0 0 12 10"><path d="M2-2h8v7H2z" fill="none" stroke="#fff" stroke-width="3"/></svg></button>
            <button type="button" class="close" aria-label="Close"><svg width="12" height="10" viewBox="0 0 12 10"><path d="M2-1l8 8M10-1L2 7" stroke="#fff" stroke-width="3"/></svg></button>
        </div>
    </header>

    <nav class="menu main-menu" aria-label="Main menu">
        <button type="button">File</button><button type="button">Edit</button><button type="button">Modify</button><button type="button">Create</button><button type="button">Display</button><button type="button">Window</button><button type="button">Assets</button><button type="button">Animate</button><button type="button">Geometry Cache</button><button type="button">Create Deformers</button><button type="button">Edit Deformers</button><button type="button">Skeleton</button><button type="button">Skin</button><button type="button">Constrain</button><button type="button">Character</button><button type="button">Comet</button><button type="button">Bonus Tools</button><button type="button">Ninja Dojo</button><button type="button">The Setup Machine</button><button type="button">Muscle</button><button type="button">Face Machine</button><button type="button">Pipeline Cache</button><button type="button">Help</button>
    </nav>

    <!-- Status line -->
    <div class="status-line">
        <span class="grip"></span>
        <div class="mode-select">
            <select aria-label="Menu set"><option>Animation</option></select>
            <svg width="12" height="10"><path d="M2 2h8L6 7z" fill="#ccc"/></svg>
        </div>
        <svg class="sep"><use href="#sep"/></svg>
        <button type="button" class="ic" aria-label="New scene"><svg><use href="#i-new"/></svg></button>
        <button type="button" class="ic" aria-label="Open scene"><svg><use href="#i-open"/></svg></button>
        <button type="button" class="ic" aria-label="Save scene"><svg><use href="#i-save"/></svg></button>
        <svg class="more" viewBox="0 0 8 16"><path d="M2 3v10l4-5z" fill="#555" stroke="#aaa"/></svg>
        <svg class="sep"><use href="#sep"/></svg>
        <button type="button" class="ic" aria-label="Select by hierarchy"><svg><use href="#i-hier"/></svg></button>
        <button type="button" class="ic on" aria-label="Select by object"><svg><use href="#i-obj"/></svg></button>
        <button type="button" class="ic" aria-label="Select by component"><svg><use href="#i-comp"/></svg></button>
        <svg class="sep"><use href="#sep"/></svg>
        <svg class="mask"><use href="#i-mask"/></svg>
        <button type="button" class="ic on" aria-label="Handles"><svg><use href="#i-plus"/></svg></button>
        <button type="button" class="ic on" aria-label="Joints"><svg><use href="#i-joint"/></svg></button>
        <button type="button" class="ic on" aria-label="Curves"><svg><use href="#i-curve"/></svg></button>
        <button type="button" class="ic on" aria-label="Surfaces"><svg><use href="#i-surf"/></svg></button>
        <button type="button" class="ic on" aria-label="Deformations"><svg><use href="#i-latt"/></svg></button>
        <button type="button" class="ic on" aria-label="Dynamics"><svg><use href="#i-part"/></svg></button>
        <button type="button" class="ic on" aria-label="Rendering"><svg><use href="#i-rend"/></svg></button>
        <button type="button" class="ic on" aria-label="Miscellaneous"><svg><use href="#i-help"/></svg></button>
        <div class="lock-group">
            <button type="button" class="ic" aria-label="Lock selection"><svg><use href="#i-lock"/></svg></button>
            <button type="button" class="ic" aria-label="Highlight selection"><svg><use href="#i-hilite"/></svg></button>
        </div>
        <svg class="sep"><use href="#sep"/></svg>
        <button type="button" class="ic" aria-label="Snap to grids"><svg><use href="#i-sgrid"/></svg></button>
        <button type="button" class="ic" aria-label="Snap to curves"><svg><use href="#i-scurve"/></svg></button>
        <button type="button" class="ic" aria-label="Snap to points"><svg><use href="#i-spoint"/></svg></button>
        <button type="button" class="ic" aria-label="Snap to view planes"><svg><use href="#i-splane"/></svg></button>
        <button type="button" class="ic" aria-label="Make live"><svg viewBox="0 0 22 22"><use href="#magnet" x="0" y="1" width="24" height="24"/></svg></button>
        <svg class="sep"><use href="#sep"/></svg>
        <button type="button" class="ic" aria-label="Inputs"><svg><use href="#i-in"/></svg></button>
        <button type="button" class="ic" aria-label="Outputs"><svg><use href="#i-out"/></svg></button>
        <button type="button" class="ic on" aria-label="Construction history"><svg><use href="#i-hist"/></svg></button>
        <svg class="sep"><use href="#sep"/></svg>
        <button type="button" class="ic" aria-label="Render view"><svg><use href="#i-rview"/></svg></button>
        <button type="button" class="ic" aria-label="Render frame"><svg><use href="#clap"/></svg></button>
        <button type="button" class="ic" aria-label="IPR render"><svg><use href="#i-ipr"/></svg></button>
        <button type="button" class="ic" aria-label="Render settings"><svg><use href="#i-rset"/></svg></button>
        <svg class="sep"><use href="#sep"/></svg>
        <svg class="drop"><use href="#down"/></svg>
        <svg class="abs"><use href="#i-abs"/></svg>
        <label class="coord">X:<input type="text"></label>
        <label class="coord">Y:<input type="text"></label>
        <label class="coord">Z:<input type="text"></label>
        <div class="status-right">
            <button type="button" class="ic on" aria-label="Attribute editor"><svg><use href="#i-attr"/></svg></button>
            <button type="button" class="ic" aria-label="Tool settings"><svg><use href="#i-tool"/></svg></button>
            <button type="button" class="ic on" aria-label="Channel box"><svg><use href="#i-chan"/></svg></button>
        </div>
    </div>

    <!-- Shelf -->
    <div class="shelf">
        <span class="grip"></span>
        <div class="shelf-switch">
            <span class="chip"></span>
            <svg width="12" height="10"><use href="#down"/></svg>
        </div>
        <div class="shelf-main">
            <div class="tabs">
                <button type="button">General</button><button type="button">Curves</button><button type="button">Surfaces</button><button type="button" class="active">Polygons</button><button type="button">Subdivs</button><button type="button">Deformation</button><button type="button">Animation</button><button type="button">Dynamics</button><button type="button">Rendering</button><button type="button">PaintEffects</button><button type="button">Toon</button><button type="button">Muscle</button><button type="button">Fluids</button><button type="button">Fur</button><button type="button">Hair</button><button type="button">nCloth</button><button type="button">Custom</button><button type="button">UVLayout</button>
                <svg class="trash"><use href="#i-trash"/></svg>
            </div>
            <div class="shelf-box">
                <button type="button" aria-label="Sphere"><svg><use href="#s-sphere"/></svg></button>
                <button type="button" aria-label="Cube"><svg><use href="#s-cube"/></svg></button>
                <button type="button" aria-label="Cylinder"><svg><use href="#s-cyl"/></svg></button>
                <button type="button" aria-label="Cone"><svg><use href="#s-cone"/></svg></button>
                <button type="button" aria-label="Plane"><svg><use href="#s-plane"/></svg></button>
                <button type="button" aria-label="Torus"><svg><use href="#s-torus"/></svg></button>
                <button type="button" aria-label="Pyramid"><svg><use href="#s-pyr"/></svg></button>
                <button type="button" aria-label="Pipe"><svg><use href="#s-pipe"/></svg></button>
                <button type="button" aria-label="Combine"><svg><use href="#s-comb"/></svg></button>
                <button type="button" aria-label="Extract"><svg><use href="#s-extr"/></svg></button>
                <button type="button" aria-label="Mirror geometry"><svg><use href="#s-mirror"/></svg></button>
                <button type="button" aria-label="Smooth"><svg><use href="#s-sph2"/></svg></button>
                <button type="button" aria-label="Smooth proxy"><svg><use href="#s-cage"/></svg></button>
                <button type="button" aria-label="Reduce"><svg><use href="#s-fold"/></svg></button>
                <button type="button" aria-label="Create polygon tool"><svg><use href="#s-cut"/></svg></button>
                <button type="button" aria-label="Extrude"><svg><use href="#s-extface"/></svg></button>
                <button type="button" aria-label="Bridge"><svg><use href="#s-bridge"/></svg></button>
                <button type="button" aria-label="Bevel"><svg><use href="#s-bevel"/></svg></button>
                <button type="button" aria-label="Merge"><svg><use href="#s-dup"/></svg></button>
                <button type="button" aria-label="Split tool"><svg><use href="#s-target"/></svg></button>
                <button type="button" aria-label="Insert edge loop"><svg><use href="#s-split"/></svg></button>
                <button type="button" aria-label="Triangulate"><svg><use href="#s-fold"/></svg></button>
                <button type="button" aria-label="Collapse"><svg><use href="#s-blocks"/></svg></button>
                <button type="button" aria-label="Duplicate face"><svg><use href="#s-tiles"/></svg></button>
                <button type="button" aria-label="Sculpt geometry"><svg><use href="#s-soft"/></svg></button>
                <button type="button" aria-label="Planar mapping"><svg><use href="#s-uv"/></svg></button>
                <button type="button" aria-label="Cylindrical mapping"><svg><use href="#s-uvcyl"/></svg></button>
                <button type="button" aria-label="Spherical mapping"><svg><use href="#s-uvcyl"/></svg></button>
                <button type="button" aria-label="Automatic mapping"><svg><use href="#s-uvauto"/></svg></button>
                <button type="button" aria-label="UV texture editor"><svg><use href="#s-uvwin"/></svg></button>
                <button type="button" class="script"><svg><use href="#bird"/></svg><span>UVMa</span></button>
                <button type="button" class="script"><svg><use href="#bird"/></svg><span>MTA</span></button>
            </div>
        </div>
    </div>

    <main class="workspace">
        <!-- Toolbox -->
        <aside class="toolbox">
            <div class="tool-frame">
                <span class="grip-h"></span>
                <div class="tools">
                    <button type="button" class="active" aria-label="Select tool"><svg viewBox="0 0 32 32"><use href="#cursor" x="9" y="5" width="16" height="22"/></svg></button>
                    <button type="button" aria-label="Lasso tool"><svg><use href="#t-lasso"/></svg></button>
                    <button type="button" aria-label="Paint selection tool"><svg><use href="#t-paint"/></svg></button>
                    <button type="button" aria-label="Move tool"><svg><use href="#t-move"/></svg></button>
                    <button type="button" aria-label="Rotate tool"><svg><use href="#t-rot"/></svg></button>
                    <button type="button" aria-label="Scale tool"><svg><use href="#t-scale"/></svg></button>
                    <button type="button" aria-label="Universal manipulator"><svg><use href="#t-univ"/></svg></button>
                    <button type="button" aria-label="Soft modification tool"><svg><use href="#t-soft"/></svg></button>
                    <button type="button" aria-label="Show manipulator tool"><svg><use href="#t-manip"/></svg></button>
                    <button type="button" aria-label="Last tool"></button>
                </div>
                <div class="layouts">
                    <button type="button" aria-label="Single perspective view"><svg><use href="#l-persp"/></svg></button>
                    <button type="button" aria-label="Four view"><svg><use href="#l-four"/></svg></button>
                    <button type="button" aria-label="Outliner and persp"><svg><use href="#l-outl"/></svg></button>
                    <button type="button" aria-label="Persp and graph"><svg><use href="#l-graph"/></svg></button>
                    <button type="button" aria-label="Hypershade and persp"><svg><use href="#l-hyper"/></svg></button>
                    <button type="button" aria-label="Persp and UV editor"><svg><use href="#l-uv"/></svg></button>
                    <button type="button" class="expand" aria-label="More layouts"><svg><use href="#down"/></svg></button>
                </div>
            </div>
            <button type="button" class="maya-logo" aria-label="Maya home"><svg><use href="#bird"/></svg></button>
        </aside>

        <!-- Perspective panel -->
        <section class="panel">
            <nav class="menu panel-menu" aria-label="Panel menu">
                <button type="button">View</button><button type="button">Shading</button><button type="button">Lighting</button><button type="button">Show</button><button type="button">Renderer</button><button type="button">Panels</button>
            </nav>
            <div class="panel-tools">
                <svg class="sep"><use href="#sep"/></svg>
                <button type="button" aria-label="Select camera"><svg><use href="#p-cam"/></svg></button>
                <button type="button" aria-label="Camera attributes"><svg><use href="#p-camattr"/></svg></button>
                <button type="button" aria-label="Bookmarks"><svg><use href="#p-book"/></svg></button>
                <button type="button" aria-label="Image plane"><svg><use href="#p-plane"/></svg></button>
                <button type="button" aria-label="2D pan and zoom"><svg><use href="#p-zoom"/></svg></button>
                <svg class="sep"><use href="#sep"/></svg>
                <button type="button" class="on blue" aria-label="Grid"><svg><use href="#p-grid"/></svg></button>
                <button type="button" aria-label="Film gate"><svg><use href="#p-film"/></svg></button>
                <button type="button" aria-label="Resolution gate"><svg><use href="#p-res"/></svg></button>
                <button type="button" class="on" aria-label="Gate mask"><svg><use href="#p-gate"/></svg></button>
                <button type="button" aria-label="Field chart"><svg><use href="#p-field"/></svg></button>
                <button type="button" aria-label="Safe action"><svg><use href="#p-safe"/></svg></button>
                <button type="button" aria-label="Safe title"><svg><use href="#p-title"/></svg></button>
                <svg class="sep"><use href="#sep"/></svg>
                <button type="button" class="on" aria-label="Wireframe"><svg><use href="#p-wire"/></svg></button>
                <button type="button" aria-label="Smooth shade"><svg><use href="#p-shade"/></svg></button>
                <button type="button" aria-label="Wireframe on shaded"><svg><use href="#p-shwire"/></svg></button>
                <button type="button" aria-label="Textured"><svg><use href="#p-tex"/></svg></button>
                <button type="button" aria-label="Use all lights"><svg><use href="#p-light"/></svg></button>
                <button type="button" aria-label="Shadows"><svg><use href="#p-shadow"/></svg></button>
                <button type="button" aria-label="High quality"><svg><use href="#p-hq"/></svg></button>
                <svg class="sep"><use href="#sep"/></svg>
                <button type="button" aria-label="Isolate select"><svg><use href="#p-iso"/></svg></button>
                <svg class="sep"><use href="#sep"/></svg>
                <button type="button" aria-label="X-ray"><svg><use href="#p-xray"/></svg></button>
                <button type="button" aria-label="X-ray active"><svg><use href="#p-xact"/></svg></button>
                <button type="button" aria-label="X-ray joints"><svg><use href="#p-xjnt"/></svg></button>
            </div>
            <div class="viewport">
                <svg class="scene" viewBox="0 0 1177 695" preserveAspectRatio="xMidYMid meet" aria-hidden="true">
                    <path id="grid" class="grid-lines" d=""/>
                    <path id="axes" class="grid-axes" d=""/>
                </svg>
                <table class="hud">
                    <tr><th scope="row">Verts:</th><td>0</td><td>0</td><td>0</td></tr>
                    <tr><th scope="row">Edges:</th><td>0</td><td>0</td><td>0</td></tr>
                    <tr><th scope="row">Faces:</th><td>0</td><td>0</td><td>0</td></tr>
                    <tr><th scope="row">Tris:</th><td>0</td><td>0</td><td>0</td></tr>
                    <tr><th scope="row">UVs:</th><td>0</td><td>0</td><td>0</td></tr>
                </table>
                <svg class="view-cube" width="100" height="100" viewBox="0 0 100 100">
                    <path d="M15 62l35 28 36-28-36-10z" fill="#1d2730" opacity=".6" filter="url(#soft)"/>
                    <path d="M50 10l35 12-35 14-34-14z" fill="#abb6c5"/>
                    <path d="M16 22l34 14v44L19 61z" fill="url(#face)"/>
                    <path d="M85 22L50 36v44l32-19z" fill="url(#face)"/>
                    <path d="M50 10l35 12-35 14-34-14zM16 22l3 39 31 19 32-19 3-39" fill="none" stroke="#6f7d8b" stroke-dasharray="5 2"/>
                    <path d="M50 36v44" stroke="#4a545f"/>
                    <g class="cube-text">
                        <text transform="matrix(.75 .4 0 1.2 21 49)">FRONT</text>
                        <text transform="matrix(.75 -.4 0 1.2 56 62)">RIGHT</text>
                        <text transform="matrix(.7 -.2 .6 .6 41 24)">TOP</text>
                    </g>
                </svg>
                <svg class="axis" width="40" height="40" viewBox="0 0 40 40">
                    <path d="M18 13v13" stroke="#0f0"/><path d="M18 26l-9 3" stroke="#00f"/><path d="M18 26l9 3" stroke="#f00"/>
                    <text x="14" y="10" fill="#0f0">y</text><text x="3" y="29" fill="#00f">z</text><text x="25" y="29" fill="#f00">x</text>
                </svg>
                <span class="camera-name">persp</span>
            </div>
        </section>

        <!-- Attribute editor -->
        <section class="attr">
            <div class="attr-title">
                <span class="grip-h"></span>
                <h2>Attribute Editor</h2>
                <span class="grip-h"></span>
                <button type="button" aria-label="Float"><svg width="10" height="10" viewBox="0 0 10 10"><path d="M4 1h5v4H4zM1 5h5v4H1z" fill="none" stroke="#000" stroke-width="1.500"/></svg></button>
                <button type="button" aria-label="Close"><svg width="10" height="10" viewBox="0 0 10 10"><path d="M1 1l8 8M9 1L1 9" stroke="#000" stroke-width="2"/></svg></button>
            </div>
            <nav class="menu attr-menu" aria-label="Attribute editor menu">
                <button type="button">List</button><button type="button">Selected</button><button type="button">Focus</button><button type="button">Attributes</button><button type="button">Show</button><button type="button">Help</button>
            </nav>
            <div class="attr-body">
                <p>Make a selection to view attributes</p>
            </div>
            <div class="attr-actions">
                <button type="button" disabled>Select</button>
                <button type="button">Load Attributes</button>
                <button type="button" disabled>Copy Tab</button>
            </div>
        </section>
        <div class="side-tabs">
            <button type="button" class="active">Attribute Editor</button>
            <button type="button">Channel Box / Layer Editor</button>
            <button type="button">Ninja Dojo V 4.6</button>
        </div>
    </main>

    <!-- Time slider -->
    <div class="time-row">
        <span class="grip"></span>
        <div class="timeline">
            <div class="frame current"><span>1</span><b>1</b></div><div class="frame"><span>2</span></div><div class="frame"><span>3</span></div><div class="frame"><span>4</span></div><div class="frame"><span>5</span></div><div class="frame"><span>6</span></div><div class="frame"><span>7</span></div><div class="frame"><span>8</span></div><div class="frame"><span>9</span></div><div class="frame"><span>10</span></div><div class="frame"><span>11</span></div><div class="frame"><span>12</span></div><div class="frame"><span>13</span></div><div class="frame"><span>14</span></div><div class="frame"><span>15</span></div><div class="frame"><span>16</span></div><div class="frame"><span>17</span></div><div class="frame"><span>18</span></div><div class="frame"><span>19</span></div><div class="frame"><span>20</span></div><div class="frame"><span>21</span></div><div class="frame"><span>22</span></div><div class="frame"><span>23</span></div><div class="frame"><span>24</span></div>
        </div>
        <input class="field" type="text" value="1.00" aria-label="Current time">
        <div class="playback">
            <button type="button" aria-label="Go to start"><svg><use href="#b-first"/></svg></button>
            <button type="button" aria-label="Step back frame"><svg><use href="#b-back"/></svg></button>
            <button type="button" aria-label="Step back key"><svg><use href="#b-backkey"/></svg></button>
            <button type="button" aria-label="Play backwards"><svg><use href="#b-rev"/></svg></button>
            <button type="button" class="flip" aria-label="Play forwards"><svg><use href="#b-rev"/></svg></button>
            <button type="button" class="flip" aria-label="Step forward key"><svg><use href="#b-backkey"/></svg></button>
            <button type="button" class="flip" aria-label="Step forward frame"><svg><use href="#b-back"/></svg></button>
            <button type="button" class="flip" aria-label="Go to end"><svg><use href="#b-first"/></svg></button>
        </div>
    </div>

    <!-- Range slider -->
    <div class="range-row">
        <span class="grip"></span>
        <input class="field" type="text" value="1.00" aria-label="Animation start">
        <input class="field" type="text" value="1.00" aria-label="Playback start">
        <div class="range">
            <div class="range-thumb"><i></i><span>1</span><span class="end">24</span><i></i></div>
        </div>
        <input class="field" type="text" value="24.00" aria-label="Playback end">
        <input class="field" type="text" value="48.00" aria-label="Animation end">
        <svg class="drop"><use href="#down"/></svg>
        <input class="field flat" type="text" value="No Anim Layer" aria-label="Anim layer">
        <svg class="drop"><use href="#down"/></svg>
        <input class="field flat" type="text" value="No Character Set" aria-label="Character set">
        <button type="button" class="key" aria-label="Auto keyframe"><svg width="18" height="16" viewBox="0 0 18 16"><path fill="#a04050" d="M0 0h18v16H0z"/><circle cx="4" cy="8" r="2.500" fill="none" stroke="#b8c4cc" stroke-width="2"/><path d="M7 8h9v4M13 8v3" fill="none" stroke="#b8c4cc" stroke-width="2"/></svg></button>
        <button type="button" class="small-ic" aria-label="Preferences"><svg width="14" height="15" viewBox="0 0 14 15"><path fill="#eee" d="M0 0h14v15H0z"/><path fill="#5aa6e6" d="M0 0h14v3H0z"/><path d="M2 12l8-7M4 6l7 2-3 5M7 5l-2 7" stroke="#c33" fill="none"/></svg></button>
    </div>

    <!-- Command line -->
    <div class="command-row">
        <span class="grip"></span>
        <label for="mel">MEL</label>
        <input id="mel" type="text">
        <span class="dot"></span>
        <output class="result"></output>
        <button type="button" class="small-ic" aria-label="Script editor"><svg width="14" height="15" viewBox="0 0 14 15"><path fill="#eee" d="M0 0h14v15H0z"/><path fill="#5aa6e6" d="M0 0h14v3H0z"/><path fill="#777" stroke="#222" d="M2 5h10v4H2z"/><path fill="#ddd" stroke="#222" d="M2 9h10v4H2z"/></svg></button>
    </div>

    <footer class="help-row">
        <span class="grip"></span>
        <div class="help-line">
            <span>Select Tool: select an object</span>
            <svg width="14" height="14"><path d="M0 14L14 0M4 14L14 4M8 14l6-6" stroke="#888"/></svg>
        </div>
    </footer>

    <script src="script.js"></script>
</body>
</html>
```

FILE: styles.css
```css
* {
    box-sizing: border-box;
}
body {
    margin: 0;
    height: 100vh;
    display: flex;
    flex-direction: column;
    background: #444;
    color: #c8c8c8;
    font-family: "Liberation Sans", Arial, sans-serif;
    font-size: 11px;
    overflow: hidden;
}
button, input, select {
    font: inherit;
    color: inherit;
    margin: 0;
}
button {
    background: none;
    border: 0;
    padding: 0;
    white-space: nowrap;
}
svg {
    display: block;
    flex: none;
}
.defs {
    position: absolute;
}

/* grips */
.grip {
    width: 6px;
    margin: 3px 0 3px 6px;
    flex: none;
    align-self: stretch;
    background-image: radial-gradient(circle at 1px 1px, #6c6c6c 1px, transparent 1px), radial-gradient(circle at 4px 4px, #6c6c6c 1px, transparent 1px);
    background-size: 6px 6px;
}
.grip-h {
    height: 6px;
    background-image: radial-gradient(circle at 1px 1px, #6c6c6c 1px, transparent 1px), radial-gradient(circle at 4px 4px, #6c6c6c 1px, transparent 1px);
    background-size: 6px 6px;
}

/* title bar */
.titlebar {
    position: relative;
    height: 22px;
    flex: none;
    display: flex;
    align-items: flex-start;
    background: #0b0f15;
    border-bottom: 1px solid #16161a;
    box-shadow: inset 0 -1px #b4b6bb;
    overflow: hidden;
}
.glass {
    position: absolute;
    left: 0;
    top: 0;
    width: 100%;
    height: 20px;
}
.app-icon {
    position: relative;
    width: 12px;
    height: 14px;
    margin-left: 2px;
}
.app-title {
    position: relative;
    margin-left: 7px;
    line-height: 14px;
    font-family: "Open Sans", sans-serif;
    font-size: 11px;
    color: #000;
}
.window-buttons {
    position: relative;
    display: flex;
    margin-left: auto;
    height: 12px;
    border: 1px solid #ccc;
    border-top: 0;
    border-right: 0;
    border-radius: 0 0 0 4px;
    overflow: hidden;
}
.window-buttons button {
    width: 28px;
    background: linear-gradient(#6e7276, #4a4d50);
    border-right: 1px solid #bbb;
    display: flex;
    justify-content: center;
    align-items: flex-start;
}
.window-buttons .close {
    width: 46px;
    background: linear-gradient(#a8331c, #d2452a);
    border-right: 0;
}

/* menus */
.menu {
    display: flex;
    align-items: center;
    gap: 13px;
}
.main-menu {
    height: 19px;
    flex: none;
    padding: 1px 8px 0;
    border-bottom: 1px solid #2a2a2a;
}

/* status line */
.status-line {
    height: 33px;
    flex: none;
    display: flex;
    align-items: center;
    border-bottom: 1px solid #333;
}
.mode-select {
    position: relative;
    width: 98px;
    height: 20px;
    margin-bottom: 7px;
}
.mode-select select {
    appearance: none;
    width: 100%;
    height: 100%;
    padding: 0 3px;
    background: linear-gradient(90deg, transparent 82px, #2e2e2e 82px, #2e2e2e 83px, transparent 83px), #5a5a5a;
    border: 1px solid #2c2c2c;
    border-radius: 3px;
}
.mode-select svg {
    position: absolute;
    right: 2px;
    top: 6px;
    pointer-events: none;
}
.sep {
    width: 12px;
    height: 28px;
}
.ic {
    width: 24px;
    height: 25px;
    margin: 0 1px;
    flex: none;
    display: flex;
    align-items: center;
    justify-content: center;
    border: 1px solid transparent;
    border-radius: 3px;
}
.ic svg {
    width: 22px;
    height: 22px;
}
.ic.on {
    background: #5d5d5d;
    border-color: #292929;
}
.more {
    width: 8px;
    height: 16px;
}
.mask {
    width: 20px;
    height: 24px;
}
.lock-group {
    display: flex;
    padding-left: 3px;
}
.drop {
    width: 12px;
    height: 10px;
    margin: 0 2px;
}
.abs {
    width: 16px;
    height: 16px;
    margin-right: 4px;
}
.coord {
    display: flex;
    align-items: center;
    gap: 2px;
    color: #aaa;
    margin-right: 1px;
}
.coord input {
    width: 38px;
    height: 26px;
    background: #2a2a2a;
    border: 1px solid #525252;
    border-radius: 3px;
}
.status-right {
    display: flex;
    margin-left: auto;
    padding-right: 3px;
}

/* shelf */
.shelf {
    height: 72px;
    flex: none;
    display: flex;
    padding-top: 3px;
    border-bottom: 1px solid #2c2c2c;
}
.shelf-switch {
    width: 21px;
    height: 64px;
    margin: 0 3px 0 2px;
    flex: none;
    display: flex;
    flex-direction: column;
    align-items: center;
    justify-content: flex-end;
    gap: 4px;
    padding-bottom: 2px;
    border: 1px solid #2b2b2b;
    border-right-color: #686868;
    background: linear-gradient(transparent 46px, #999 46px, #999 47px, transparent 47px);
}
.chip {
    width: 13px;
    height: 9px;
    margin-bottom: 4px;
    background: #666;
    border: 1px solid #2c2c2c;
    border-radius: 2px;
}
.shelf-main {
    flex: 1;
    min-width: 0;
    padding-right: 4px;
}
.tabs {
    display: flex;
    align-items: flex-end;
    height: 21px;
    border-bottom: 1px solid #2b2b2b;
}
.tabs button {
    height: 16px;
    padding: 0 11px;
    box-shadow: inset 1px 1px #2b2b2b;
    background: #404040;
}
.tabs .active {
    height: 20px;
    background: #626262;
    border-radius: 3px 3px 0 0;
}
.trash {
    width: 14px;
    height: 17px;
    margin: 0 3px 3px auto;
}
.shelf-box {
    display: flex;
    align-items: center;
    height: 42px;
    margin-top: 1px;
    padding-left: 3px;
    border: 2px solid #2b2b2b;
    border-radius: 3px;
    outline: 1px solid #5c5c5c;
}
.shelf-box button {
    width: 35px;
    height: 34px;
    flex: none;
    display: flex;
    align-items: center;
    justify-content: center;
}
.shelf-box svg {
    width: 30px;
    height: 30px;
}
.shelf-box .script {
    flex-direction: column;
    overflow: hidden;
    font-weight: bold;
}
.shelf-box .script svg {
    width: 20px;
    height: 20px;
}
.script span {
    background: #333;
    line-height: 13px;
    padding: 0 1px;
    border-radius: 2px;
}

/* workspace */
.workspace {
    flex: 1;
    min-height: 0;
    display: flex;
    padding-bottom: 2px;
}
.toolbox {
    width: 46px;
    flex: none;
    display: flex;
    flex-direction: column;
    padding: 2px 4px 4px 3px;
}
.tool-frame {
    flex: 1;
    border: 1px solid #2b2b2b;
    border-width: 0 1px 1px;
    border-right-color: #666;
    border-bottom-color: #666;
}
.tool-frame .grip-h {
    display: block;
    margin: 4px 0 3px;
}
.tools {
    display: flex;
    flex-direction: column;
    gap: 3px;
    padding-left: 1px;
}
.tools button {
    width: 34px;
    height: 34px;
    padding: 1px;
    border: 1px solid #666;
    border-radius: 2px;
    outline: 1px solid #2e2e2e;
}
.tools .active {
    background: linear-gradient(#8f8f8f, #a6a6a6);
}
.tools svg {
    width: 30px;
    height: 30px;
}
.layouts {
    display: flex;
    flex-direction: column;
    gap: 4px;
    padding: 14px 0 0 1px;
}
.layouts button {
    width: 34px;
    height: 34px;
    border: 1px solid #222;
    border-radius: 2px;
}
.layouts svg {
    width: 32px;
    height: 32px;
}
.layouts .expand {
    width: 32px;
    height: 32px;
    border-color: #666 #222 #222 #666;
    display: flex;
    align-items: center;
    justify-content: center;
}
.layouts .expand svg {
    width: 7px;
    height: 6px;
}
.maya-logo {
    width: 30px;
    height: 31px;
    margin: 2px 0 0 4px;
    padding: 2px;
    background: linear-gradient(#333, #707070);
    border: 1px solid #111;
    border-radius: 3px;
}
.maya-logo svg {
    width: 24px;
    height: 24px;
}

/* perspective panel */
.panel {
    flex: 1;
    min-width: 0;
    margin-top: 2px;
    display: flex;
    flex-direction: column;
    border: 1px solid #8a8a8a;
}
.panel-menu {
    height: 18px;
    padding-left: 7px;
}
.panel-tools {
    height: 21px;
    padding-bottom: 2px;
    display: flex;
    align-items: center;
}
.panel-tools .sep {
    width: 11px;
    height: 18px;
}
.panel-tools button {
    width: 20px;
    height: 19px;
    padding: 0 1px;
    flex: none;
    border-radius: 3px;
}
.panel-tools button svg {
    width: 18px;
    height: 18px;
}
.panel-tools .on {
    background: #666;
    outline: 1px solid #262626;
    outline-offset: -1px;
}
.panel-tools .blue {
    background: #596878;
}
.viewport {
    flex: 1;
    min-height: 0;
    position: relative;
    overflow: hidden;
    background: linear-gradient(#8093ab, #52606e 42%, #353d46 70%, #1e2022 92%, #1a1a1c);
}
.scene {
    width: 100%;
    height: 100%;
}
.grid-lines {
    fill: none;
    stroke: #858687;
    stroke-width: 1;
    shape-rendering: crispEdges;
}
.grid-axes {
    fill: none;
    stroke: #000;
    stroke-width: 2;
    shape-rendering: crispEdges;
}
.hud {
    position: absolute;
    left: 14px;
    top: -4px;
    border-collapse: collapse;
    font-weight: bold;
}
.hud th {
    width: 79px;
    height: 20px;
    padding: 0;
    text-align: left;
    color: #004a1e;
}
.hud td {
    width: 65px;
    padding: 0;
    text-align: center;
    color: #fff;
}
.view-cube {
    position: absolute;
    right: 3px;
    top: 10px;
}
.cube-text {
    font-size: 10px;
    font-weight: bold;
    fill: #66727f;
}
.axis {
    position: absolute;
    left: 7px;
    bottom: 11px;
    font-family: "DejaVu Sans", sans-serif;
    font-size: 11px;
    font-weight: bold;
}
.camera-name {
    position: absolute;
    left: 566px;
    bottom: 6px;
    font-family: "DejaVu Sans", sans-serif;
    font-weight: bold;
    color: #004a1e;
}

/* attribute editor */
.attr {
    width: 432px;
    flex: none;
    display: flex;
    flex-direction: column;
    padding: 3px 1px 1px 9px;
    background: radial-gradient(circle, #6c6c6c 1px, transparent 1px) 2px 50% / 5px 5px repeat-y;
}
.attr-title {
    height: 15px;
    display: flex;
    align-items: center;
    gap: 3px;
    background: #444;
}
.attr-title .grip-h {
    flex: 1;
}
.attr-title h2 {
    margin: 0 6px;
    font-size: 10px;
    font-weight: normal;
}
.attr-title button {
    width: 13px;
    height: 13px;
    border: 1px solid #222;
    border-radius: 3px;
    background: #5a5a5a;
    display: flex;
    align-items: center;
    justify-content: center;
}
.attr-menu {
    height: 28px;
    padding: 4px 6px 0;
}
.attr-body {
    flex: 1;
    border: 1px solid #2a2a2a;
    border-radius: 3px;
    box-shadow: inset 0 0 0 1px #5c5c5c;
    padding: 20px;
}
.attr-body p {
    margin: 1px 0 0;
}
.attr-actions {
    display: flex;
    gap: 2px;
    margin-top: 2px;
}
.attr-actions button {
    flex: 1;
    height: 27px;
    border: 1px solid #2c2c2c;
    border-radius: 3px;
    background: linear-gradient(#6a6a6a, #5c5c5c);
}
.attr-actions button:disabled {
    background: #4d4d4d;
    color: #7c7c7c;
}
.side-tabs {
    width: 23px;
    flex: none;
    margin-top: 2px;
    display: flex;
    flex-direction: column;
    align-items: flex-start;
    border-left: 1px solid #383838;
}
.side-tabs button {
    writing-mode: vertical-rl;
    width: 18px;
    height: 99px;
    border: 1px solid #262626;
    border-top: 0;
    background: #404040;
}
.side-tabs button:nth-child(2) {
    height: 153px;
}
.side-tabs .active {
    width: 20px;
    height: 96px;
    background: #666;
}

/* bottom rows */
.time-row, .range-row, .command-row, .help-row {
    flex: none;
    display: flex;
    align-items: center;
    border-top: 1px solid #333;
}
.time-row {
    height: 36px;
}
.timeline {
    flex: 1;
    height: 31px;
    margin: 0 3px 0 1px;
    padding: 0 6px;
    display: flex;
    background: #737373;
    border: 1px solid #8a8a8a;
    border-color: #262626 #8a8a8a #5a5a5a #262626;
}
.frame {
    flex: 1;
    display: flex;
    flex-direction: column;
    padding-left: 12px;
    color: #111;
    background: linear-gradient(#000, #000) 0 100% / 2px 15px no-repeat;
}
.frame span, .frame b {
    font-weight: normal;
    line-height: 12px;
    height: 15px;
}
.frame b {
    color: #fff;
}
.frame.current {
    background-color: #5c5c5c;
}
.field {
    width: 69px;
    height: 22px;
    flex: none;
    padding: 0 4px;
    background: #2a2a2a;
    border: 1px solid #555;
    border-radius: 3px;
}
.time-row .field {
    height: 19px;
}
.playback {
    display: flex;
    padding: 2px 3px 0;
}
.playback button {
    width: 28px;
    height: 18px;
    display: flex;
    align-items: center;
    justify-content: center;
}
.playback svg {
    width: 20px;
    height: 16px;
}
.playback .flip svg {
    transform: scaleX(-1);
}
.range-row {
    height: 29px;
    gap: 2px;
}
.range {
    flex: 1;
    height: 23px;
    margin-left: 2px;
    padding: 3px 7px 1px;
    background: #262626;
    border-right: 1px solid #777;
    border-bottom: 1px solid #777;
}
.range-thumb {
    width: 50%;
    height: 18px;
    display: flex;
    align-items: center;
    gap: 5px;
    padding: 0 5px;
    background: #656565;
}
.range-thumb i {
    width: 9px;
    height: 12px;
    border: solid #222;
    border-width: 0 1px 1px 0;
}
.range-thumb .end {
    margin-left: auto;
}
.range-row .drop {
    width: 10px;
    margin: 0 4px;
}
.field.flat {
    width: 101px;
    background: #444;
    border-color: #525252;
}
.key {
    width: 23px;
    height: 22px;
    border: 1px solid #222;
    border-radius: 3px;
    background: #777;
    display: flex;
    align-items: center;
    justify-content: center;
}
.small-ic {
    margin-right: 4px;
    border: 1px solid #222;
}
.command-row {
    height: 31px;
}
.command-row label {
    width: 46px;
    padding-left: 11px;
}
.command-row input {
    flex: 1;
    height: 25px;
    background: #2a2a2a;
    border: 1px solid #525252;
    border-radius: 3px;
}
.dot {
    width: 6px;
}
.result {
    flex: 1;
    height: 26px;
    background: #000;
    border: 1px solid #1c1c1c;
    margin-right: 1px;
}
.help-row {
    height: 30px;
    border-bottom: 2px solid #1b1b1f;
}
.help-line {
    flex: 1;
    height: 23px;
    margin: 0 3px 0 1px;
    padding-left: 12px;
    display: flex;
    align-items: center;
    justify-content: space-between;
    font-size: 10px;
    border: 1px solid #6a6a6a;
    border-color: #262626 #6a6a6a #6a6a6a #262626;
}
```

FILE: script.js
```js
// Perspective floor grid: 24 x 24 cells seen by the persp camera
var DEPTH = 5.971;
var SCALE = 1293.6;
var CENTER_X = 588.5;
var HORIZON = -258.5;
var HEIGHT = 3619.6;

function project(u, v) {
    var w = DEPTH - (u + v);
    return (CENTER_X + SCALE * (u - v) / w).toFixed(1) + ' ' + (HORIZON + HEIGHT / w).toFixed(1);
}

function line(u1, v1, u2, v2) {
    return 'M' + project(u1, v1) + 'L' + project(u2, v2);
}

var grid = '';
for (var i = -12; i <= 12; i++) {
    var t = i / 12;
    grid += line(t, -1, t, 1) + line(-1, t, 1, t);
}
document.getElementById('grid').setAttribute('d', grid);
document.getElementById('axes').setAttribute('d', line(0, -1, 0, 1) + line(-1, 0, 1, 0));
```
